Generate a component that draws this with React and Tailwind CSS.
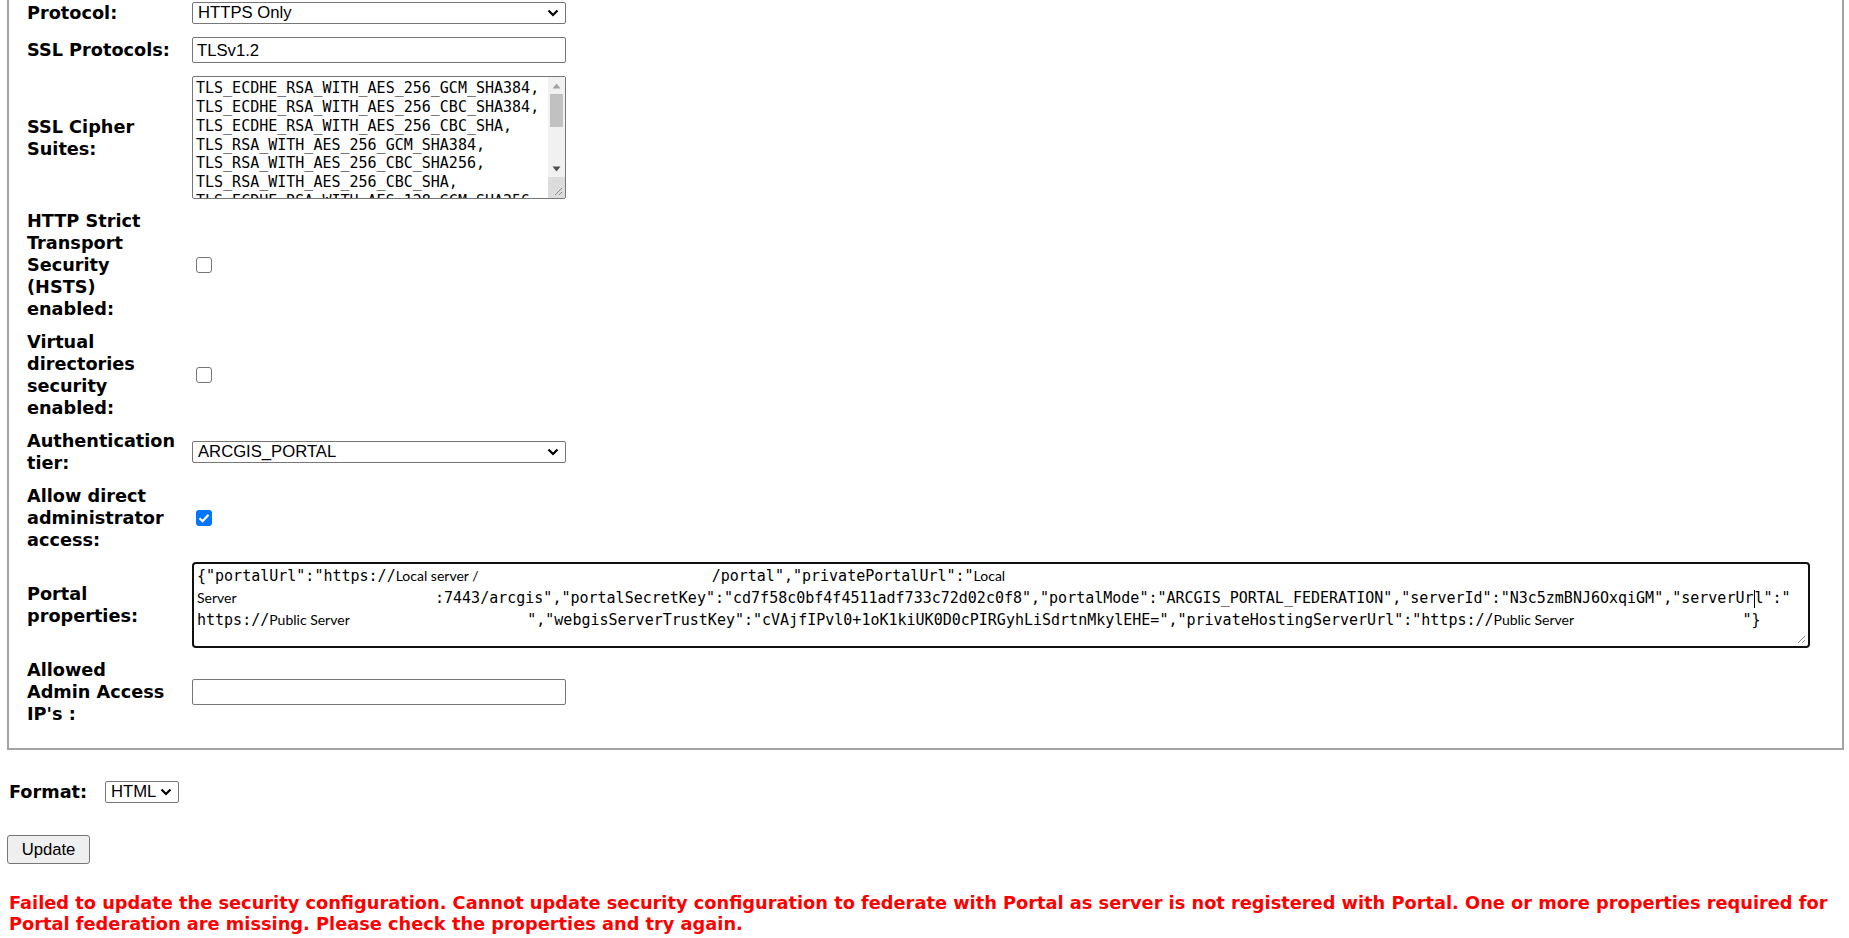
import React from "react";

const labelFont = { fontFamily: '"DejaVu Sans", Verdana, sans-serif' };

const ciphers = [
  "TLS_ECDHE_RSA_WITH_AES_256_GCM_SHA384,",
  "TLS_ECDHE_RSA_WITH_AES_256_CBC_SHA384,",
  "TLS_ECDHE_RSA_WITH_AES_256_CBC_SHA,",
  "TLS_RSA_WITH_AES_256_GCM_SHA384,",
  "TLS_RSA_WITH_AES_256_CBC_SHA256,",
  "TLS_RSA_WITH_AES_256_CBC_SHA,",
  "TLS_ECDHE_RSA_WITH_AES_128_GCM_SHA256,",
  "TLS_ECDHE_RSA_WITH_AES_128_CBC_SHA256,",
];

const Label = ({ lines }) => (
  <div className="w-[165px] shrink-0 font-bold text-[17.7px] leading-[22px] text-black">
    {lines.map((l) => (
      <div key={l} className="whitespace-nowrap">
        {l}
      </div>
    ))}
  </div>
);

const Chevron = () => (
  <svg width="12" height="8" viewBox="0 0 12 8" className="shrink-0">
    <path d="M1.5 1.5 6 6l4.5-4.5" fill="none" stroke="#000" strokeWidth="2.2" />
  </svg>
);

const Select = ({ value, className = "" }) => (
  <div
    className={`flex items-center justify-between h-[22px] border border-[#767676] rounded-[2px] bg-white pl-[5px] pr-[6px] font-['Liberation_Sans',Arial,sans-serif] text-[16.67px] text-black ${className}`}
  >
    <span className="leading-none">{value}</span>
    <Chevron />
  </div>
);

const TextInput = ({ value }) => (
  <div className="flex items-center w-[374px] h-[26px] border border-[#767676] rounded-[2px] bg-white px-[4px] font-['Liberation_Sans',Arial,sans-serif] text-[16.67px] text-black">
    {value}
  </div>
);

const Checkbox = ({ checked }) =>
  checked ? (
    <div className="ml-[4px] w-[16px] h-[16px] rounded-[3px] bg-[#0075ff] flex items-center justify-center">
      <svg width="12" height="10" viewBox="0 0 12 10">
        <path d="M1.5 5.2 4.6 8.2 10.5 1.8" fill="none" stroke="#fff" strokeWidth="2.2" />
      </svg>
    </div>
  ) : (
    <div className="ml-[4px] w-[16px] h-[16px] rounded-[3px] border border-[#767676] bg-white" />
  );

const Resizer = () => (
  <svg width="9" height="9" viewBox="0 0 9 9">
    <path d="M8 1 1 8M8 5 5 8" stroke="#8a8a8a" strokeWidth="1" />
  </svg>
);

const Triangle = ({ up }) => (
  <svg width="9" height="6" viewBox="0 0 9 6">
    <path d={up ? "M4.5 0.5 8.5 5.5H0.5Z" : "M0.5 0.5h8L4.5 5.5Z"} fill={up ? "#a3a3a3" : "#505050"} />
  </svg>
);

// cipher suite list, scrolled to the top
const CipherBox = () => (
  <div className="flex w-[374px] h-[123px] border border-[#767676] rounded-[2px] bg-white overflow-hidden">
    <div className="flex-1 overflow-hidden pl-[3px] pt-[2px] font-['DejaVu_Sans_Mono',monospace] text-[15px] leading-[18.85px] text-black whitespace-pre">
      {ciphers.map((c) => (
        <div key={c}>{c}</div>
      ))}
    </div>
    <div className="w-[17px] flex flex-col bg-[#f1f1f1]">
      <div className="h-[17px] flex items-center justify-center">
        <Triangle up />
      </div>
      <div className="mx-[2px] h-[33px] bg-[#c1c1c1]" />
      <div className="flex-1" />
      <div className="h-[17px] flex items-center justify-center">
        <Triangle />
      </div>
      <div className="h-[21px] bg-[#dcdcdc] flex items-end justify-end p-[2px]">
        <Resizer />
      </div>
    </div>
  </div>
);

const Mono = ({ children }) => (
  <span className="font-['DejaVu_Sans_Mono',monospace] text-[15px]">{children}</span>
);

const Blank = ({ w, children }) => (
  <span className={`inline-block ${w} font-['Lato',sans-serif] text-[14px] align-baseline`}>{children}</span>
);

// federation properties, shown with the host names blanked out
const PortalBox = () => (
  <div className="relative w-[1618px] h-[86px] border-2 border-[#101010] rounded-[4px] bg-white px-[3px] pt-[1px] leading-[21px] text-black whitespace-pre overflow-hidden">
    <div>
      <Mono>{'{"portalUrl":"https://'}</Mono>
      <Blank w="w-[316px]">Local server /</Blank>
      <Mono>{'/portal","privatePortalUrl":"'}</Mono>
      <Blank w="w-[60px]">Local</Blank>
    </div>
    <div>
      <Blank w="w-[238px]">Server</Blank>
      <Mono>{':7443/arcgis","portalSecretKey":"cd7f58c0bf4f4511adf733c72d02c0f8","portalMode":"ARCGIS_PORTAL_FEDERATION","serverId":"N3c5zmBNJ6OxqiGM","serverUr'}</Mono>
      <span className="inline-block w-px h-[18px] bg-black align-middle" />
      <Mono>{'l":"'}</Mono>
    </div>
    <div>
      <Mono>{"https://"}</Mono>
      <Blank w="w-[258px]">Public Server</Blank>
      <Mono>{'","webgisServerTrustKey":"cVAjfIPvl0+1oK1kiUK0D0cPIRGyhLiSdrtnMkylEHE=","privateHostingServerUrl":"https://'}</Mono>
      <Blank w="w-[249px]">Public Server</Blank>
      <Mono>{'"}'}</Mono>
    </div>
    <div className="absolute right-[2px] bottom-[2px]">
      <Resizer />
    </div>
  </div>
);

const Row = ({ lines, children, className = "" }) => (
  <div className={`flex items-center ${className}`}>
    <Label lines={lines} />
    {children}
  </div>
);

export default function App() {
  return (
    <div className="min-h-screen bg-white text-black" style={labelFont}>
      {/* security settings fieldset, top edge scrolled out of view */}
      <div className="ml-[7px] mr-[5px] border-x-2 border-b-2 border-[#a3a3a3] pl-[18px] pt-[2px] pb-[23px] flex flex-col gap-[11px]">
        <Row lines={["Protocol:"]}>
          <Select value="HTTPS Only" className="w-[374px]" />
        </Row>
        <Row lines={["SSL Protocols:"]} className="mt-[2px]">
          <TextInput value="TLSv1.2" />
        </Row>
        <Row lines={["SSL Cipher", "Suites:"]} className="mt-[2px]">
          <CipherBox />
        </Row>
        <Row lines={["HTTP Strict", "Transport", "Security", "(HSTS)", "enabled:"]}>
          <Checkbox />
        </Row>
        <Row lines={["Virtual", "directories", "security", "enabled:"]}>
          <Checkbox />
        </Row>
        <Row lines={["Authentication", "tier:"]}>
          <Select value="ARCGIS_PORTAL" className="w-[374px]" />
        </Row>
        <Row lines={["Allow direct", "administrator", "access:"]}>
          <Checkbox checked />
        </Row>
        <Row lines={["Portal", "properties:"]}>
          <PortalBox />
        </Row>
        <Row lines={["Allowed", "Admin Access", "IP's :"]}>
          <TextInput value="" />
        </Row>
      </div>

      <div className="ml-[9px] mt-[31px] flex items-center">
        <span className="w-[96px] font-bold text-[17.7px] leading-[22px]">Format:</span>
        <Select value="HTML" className="w-[74px] gap-[4px]" />
      </div>

      <button className="ml-[7px] mt-[32px] h-[29px] w-[83px] border border-[#767676] rounded-[3px] bg-[#efefef] font-['Liberation_Sans',Arial,sans-serif] text-[16.67px] text-black">
        Update
      </button>

      <p className="ml-[9px] mr-[8px] mt-[28px] font-bold text-[17.8px] leading-[21px] text-[#ff0000]">
        Failed to update the security configuration. Cannot update security configuration to federate with Portal as server is not registered with Portal. One or more properties required for Portal federation are missing. Please check the properties and try again.
      </p>
    </div>
  );
}
